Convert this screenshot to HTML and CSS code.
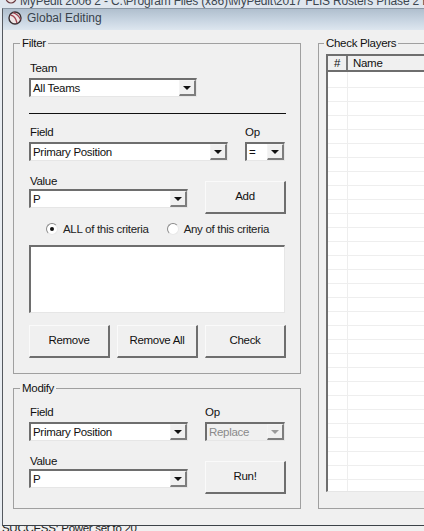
FILE: index.html
```html
<!DOCTYPE html>
<html lang="en">
<head>
<meta charset="utf-8">
<title>Global Editing</title>
<link rel="stylesheet" href="styles.css">
</head>
<body>
<div class="screen">
  <div class="back-title">
    <svg class="back-ball" viewBox="0 0 12 12" width="12" height="12"><circle cx="6" cy="6" r="5" fill="#efe4e4" stroke="#6a3a40" stroke-width="1.2"/></svg>
    <span class="back-text">MyPedit 2006 2 - C:\Program Files (x86)\MyPedit\2017 FLIS Rosters Phase 2 Backup</span>
  </div>
  <div class="dialog">
    <div class="titlebar">
      <svg class="ball" viewBox="0 0 14 14" width="14" height="14"><circle cx="7" cy="7" r="6" fill="#efe6e6" stroke="#3a3034" stroke-width="1.4"/><path d="M2.5 4C5 4.5 8 7 9 12M5 1.6C7.5 2.5 11 5 12.5 8.5" fill="none" stroke="#a04452" stroke-width="1.3"/></svg>
      <span>Global Editing</span>
    </div>
    <div class="body">
      <div class="left">
        <fieldset class="group filter">
          <legend>Filter</legend>
          <div class="field team">
            <label>Team</label>
            <div class="combo w168"><span class="val">All Teams</span><span class="arrow"></span></div>
          </div>
          <hr class="rule">
          <div class="row">
            <div class="field"><label>Field</label><div class="combo w199"><span class="val">Primary Position</span><span class="arrow"></span></div></div>
            <div class="field"><label>Op</label><div class="combo w40"><span class="val">=</span><span class="arrow"></span></div></div>
          </div>
          <div class="row value-row">
            <div class="field"><label>Value</label><div class="combo w159"><span class="val">P</span><span class="arrow"></span></div></div>
            <button class="btn side">Add</button>
          </div>
          <div class="radios">
            <span class="radio on"></span><span class="radio-label first">ALL of this criteria</span>
            <span class="radio"></span><span class="radio-label">Any of this criteria</span>
          </div>
          <div class="listbox"></div>
          <div class="buttons">
            <button class="btn">Remove</button>
            <button class="btn">Remove All</button>
            <button class="btn">Check</button>
          </div>
        </fieldset>
        <fieldset class="group modify">
          <legend>Modify</legend>
          <div class="row">
            <div class="field"><label>Field</label><div class="combo w159"><span class="val">Primary Position</span><span class="arrow"></span></div></div>
            <div class="field"><label>Op</label><div class="combo w80 disabled"><span class="val">Replace</span><span class="arrow"></span></div></div>
          </div>
          <div class="row value-row">
            <div class="field"><label>Value</label><div class="combo w159"><span class="val">P</span><span class="arrow"></span></div></div>
            <button class="btn side">Run!</button>
          </div>
        </fieldset>
      </div>
      <fieldset class="group check">
        <legend>Check Players</legend>
        <div class="grid">
          <div class="grid-head"><span class="hash">#</span><span class="name">Name</span></div>
          <div class="grid-rows"></div>
        </div>
      </fieldset>
    </div>
  </div>
  <div class="status"><span>SUCCESS: Power set to 20</span></div>
</div>
</body>
</html>
```
FILE: styles.css
```css
* { box-sizing: border-box; }
html, body { margin: 0; padding: 0; }
body { background: #f0f0f0; font-family: "Liberation Sans", Arial, sans-serif; font-size: 11.5px; letter-spacing: -0.3px; color: #111; }
.screen { width: 424px; height: 531px; overflow: hidden; display: flex; flex-direction: column; background: #e9edf2; }
.back-title { height: 8px; overflow: hidden; background: #dfe6ee; padding-left: 5px; white-space: nowrap; flex: none; display: flex; align-items: flex-start; gap: 3px; }
.back-ball { flex: none; margin-top: -8px; }
.back-text { display: block; font-size: 12px; letter-spacing: -0.18px; line-height: 12px; margin-top: -5px; color: #3c4650; }
.dialog { flex: none; height: 518px; margin-left: 2px; border-left: 1px solid #55595f; border-top: 1px solid #8a97a4; border-bottom: 1px solid #3c4248; background: #f0f0f0; display: flex; flex-direction: column; }
.titlebar { height: 21px; flex: none; display: flex; align-items: center; gap: 5px; padding: 0 0 3px 5px; font-size: 12px; letter-spacing: 0; color: #38424b; background: linear-gradient(#b0bfce, #c6d3e0 50%, #dde6ef); }
.ball { flex: none; }
.body { flex: 1; display: flex; gap: 17px; padding: 6px 0 0 10px; overflow: hidden; }
.left { flex: none; width: 288px; display: flex; flex-direction: column; gap: 7px; }
.group { margin: 0; border: 1px solid #a0a0a0; border-radius: 0; padding: 0; min-width: 0; }
.group legend { margin-left: -9px; padding: 0 2px; line-height: 14px; color: #111; }
.filter { height: 338px; padding: 11px 13px 0 15px; }
.modify { height: 128px; padding: 10px 13px 0 15px; }
.check { flex: none; width: 130px; height: 473px; padding: 4px 0 0 7px; border-right: none; }
.check legend { margin-left: -2px; }
.field { display: flex; flex-direction: column; gap: 3px; }
.field label { line-height: 14px; height: 14px; padding-left: 1px; }
.field + .field label { padding-left: 0; }
.row { display: flex; gap: 17px; align-items: flex-start; }
.modify .value-row { margin-top: 13px; }
.filter .row { margin-top: 11px; }
.filter .value-row { margin-top: 13px; }
.value-row .field { gap: 1px; }
.side { margin-top: 7px; }
.rule { margin: 16px 1px 0 0; border: none; border-top: 1px solid #111; height: 0; }
.combo { height: 19px; display: flex; align-items: center; justify-content: space-between; background: #fff; border-style: solid; border-width: 2px 1px 1px 2px; border-color: #6e6e6e #e6e6e6 #e6e6e6 #6e6e6e; padding-left: 2px; box-shadow: inset -1px 0 0 #fff; }
.w168 { width: 168px; }
.w199 { width: 199px; }
.w159 { width: 159px; }
.w40 { width: 40px; }
.w80 { width: 80px; }
.val { white-space: nowrap; }
.arrow { width: 17px; height: 16px; flex: none; position: relative; background: #f0f0f0; border-style: solid; border-width: 1px 2px 2px 1px; border-color: #f4f4f4 #7d7d7d #7d7d7d #f4f4f4; }
.arrow::after { content: ""; position: absolute; left: 3px; top: 5px; border-style: solid; border-width: 4px 4px 0; border-color: #111 transparent transparent; }
.disabled .val { color: #8a8a8a; }
.disabled { background: #f0f0f0; }
.disabled .arrow::after { border-top-color: #9a9a9a; }
.btn { width: 81px; height: 33px; padding: 0 0 2px; flex: none; font: inherit; letter-spacing: inherit; color: #111; background: #f0f0f0; border-style: solid; border-width: 1px 2px 2px 1px; border-color: #fafafa #6e6e6e #6e6e6e #fafafa; }
.radios { display: flex; align-items: center; height: 14px; margin-top: 8px; padding-left: 17px; }
.radio { width: 12px; height: 12px; border-radius: 50%; background: #fff; border: 1px solid; border-color: #8a8a8a #e8e8e8 #e8e8e8 #8a8a8a; flex: none; position: relative; }
.radio.on::after { content: ""; position: absolute; left: 3px; top: 3px; width: 4px; height: 4px; border-radius: 50%; background: #111; }
.radio-label { margin-left: 5px; white-space: nowrap; color: #222; }
.radio-label.first { margin-right: 18px; }
.listbox { height: 68px; width: 256px; margin-top: 9px; background: #fff; border-style: solid; border-width: 2px 1px 1px 2px; border-color: #6e6e6e #e6e6e6 #e6e6e6 #6e6e6e; }
.buttons { display: flex; gap: 7px; margin-top: 12px; }
.grid { height: 438px; border-style: solid; border-width: 2px 0 1px 2px; border-color: #6e6e6e #6e6e6e #e6e6e6 #6e6e6e; background: #fff; display: flex; flex-direction: column; }
.grid-head { height: 16px; flex: none; display: flex; background: #f0f0f0; border-bottom: 2px solid #6e6e6e; }
.hash { width: 20px; text-align: center; border-right: 2px solid #7a7a7a; line-height: 14px; }
.name { padding-left: 5px; line-height: 14px; }
.grid-rows { flex: 1; background-color: #fff; background-image: linear-gradient(#eeeeee, #eeeeee), repeating-linear-gradient(to bottom, #fff 0, #fff 13px, #eeeeee 13px, #eeeeee 14px); background-size: 1px 100%, 100% 100%; background-position: 19px 0, 0 2px; background-repeat: no-repeat, no-repeat; }
.status { flex: none; height: 5px; overflow: hidden; background: #f0f0f0; padding-left: 2px; }
.status span { display: block; line-height: 12px; margin-top: -4px; color: #222; white-space: nowrap; }
```
